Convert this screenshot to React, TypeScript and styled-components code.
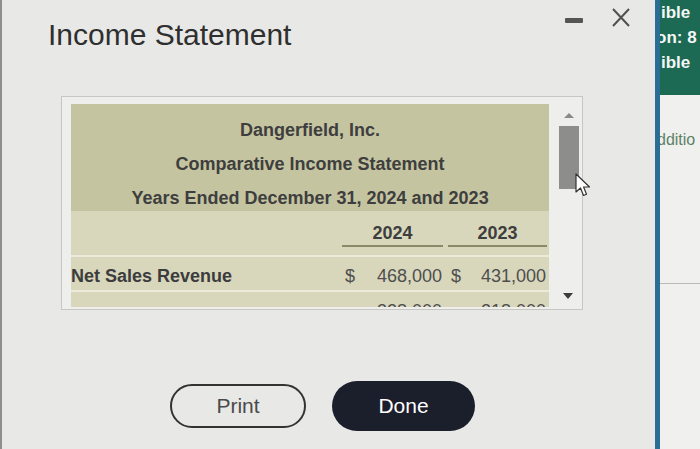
import React from "react";
import styled, { createGlobalStyle } from "styled-components";

const GlobalStyle = createGlobalStyle`
  html, body { margin: 0; padding: 0; }
  body {
    background: #e8e8e6;
    font-family: "Liberation Sans", Arial, sans-serif;
    overflow: hidden;
  }
`;

const Page = styled.div`
  display: flex;
  width: 700px;
  height: 449px;
  overflow: hidden;
  border-left: 2px solid #8e8e8c;
  box-sizing: border-box;
  background: #e8e8e6;
`;

const Main = styled.div`
  width: 653px;
  display: flex;
  flex-direction: column;
`;

const Header = styled.div`
  display: flex;
  align-items: flex-start;
  padding: 8px 25px 0 46px;
  height: 44px;
`;

const Title = styled.h1`
  margin: 10px 0 0 0;
  font-size: 30px;
  line-height: 34px;
  font-weight: 400;
  color: #2f2f2f;
`;

const Controls = styled.div`
  margin-left: auto;
  display: flex;
  align-items: flex-start;
  gap: 29px;
`;

const Minimize = styled.div`
  width: 18px;
  height: 5px;
  margin-top: 10px;
  background: #555;
  border-radius: 1px;
`;

const CloseIcon = () => (
  <svg width="18" height="19" viewBox="0 0 18 19">
    <path d="M1 1 L17 18 M17 1 L1 18" stroke="#505050" strokeWidth="2" fill="none" />
  </svg>
);

const Box = styled.div`
  position: relative;
  margin: 44px 0 0 59px;
  width: 522px;
  height: 214px;
  box-sizing: border-box;
  border: 1px solid #c6c6c3;
  background: #eeeeec;
  display: flex;
`;

const Sheet = styled.div`
  width: 479px;
  margin: 7px 0 2px 9px;
  overflow: hidden;
  color: #3e3e3e;
`;

const SheetHead = styled.div`
  background: #c5c4a1;
  height: 98px;
  padding-top: 9px;
  text-align: center;
  font-weight: 700;
  font-size: 18px;
  line-height: 34px;
`;

const Grid = styled.div<{ $top?: boolean }>`
  display: grid;
  grid-template-columns: 266px 101px 99px;
  column-gap: 5px;
  background: #d8d7bc;
  border-top: ${(p) => (p.$top ? "none" : "2px solid #ebeadb")};
`;

const YearsRow = styled(Grid)`
  height: 44px;
`;

const YearCell = styled.div`
  margin-top: 10px;
  height: 24px;
  line-height: 24px;
  text-align: center;
  font-weight: 700;
  font-size: 18px;
  border-bottom: 2px solid #8b8a68;
`;

const DataRow = styled(Grid)`
  padding-top: 5px;
  height: 28px;
  line-height: 28px;
  font-size: 18px;
`;

const Label = styled.div`
  font-weight: 700;
  color: #3c3c3c;
`;

const Amount = styled.div`
  display: flex;
  justify-content: space-between;
  padding: 0 1px 0 3px;
  color: #4e4e4e;
`;

const Scrollbar = styled.div`
  width: 33px;
  display: flex;
  flex-direction: column;
  align-items: center;
  padding: 16px 0 10px 0;
  box-sizing: border-box;
`;

const ArrowUp = styled.div`
  width: 0;
  height: 0;
  margin-left: 6px;
  border-left: 5px solid transparent;
  border-right: 5px solid transparent;
  border-bottom: 5px solid #8a8a8a;
`;

const ArrowDown = styled.div`
  width: 0;
  height: 0;
  margin-top: auto;
  margin-left: 4px;
  border-left: 5px solid transparent;
  border-right: 5px solid transparent;
  border-top: 6px solid #3c3c3c;
`;

const Thumb = styled.div`
  margin-top: 8px;
  margin-left: 7px;
  width: 20px;
  height: 63px;
  background: #8d8d8b;
`;

const Cursor = styled.svg`
  position: absolute;
  left: 513px;
  top: 76px;
`;

const Buttons = styled.div`
  display: flex;
  align-items: center;
  justify-content: center;
  gap: 26px;
  margin-top: 71px;
  padding-right: 12px;
`;

const PillButton = styled.button<{ $dark?: boolean }>`
  font-family: "Liberation Sans", Arial, sans-serif;
  font-size: 21px;
  box-sizing: border-box;
  width: ${(p) => (p.$dark ? "143px" : "136px")};
  height: ${(p) => (p.$dark ? "50px" : "44px")};
  border-radius: 25px;
  border: ${(p) => (p.$dark ? "none" : "2px solid #333")};
  background: ${(p) => (p.$dark ? "#1b1e2b" : "transparent")};
  color: ${(p) => (p.$dark ? "#ffffff" : "#4a4a4a")};
  padding: 0;
`;

const Side = styled.div`
  flex: 1;
  border-left: 5px solid #2b6e95;
  background: #f0f0ee;
  display: flex;
  flex-direction: column;
  overflow: hidden;
`;

const SideHead = styled.div`
  background: #1c6954;
  height: 95px;
  flex-shrink: 0;
  padding-left: 1px;
  color: #f4f7f5;
  font-weight: 700;
  font-size: 17px;
  line-height: 25px;
  white-space: nowrap;
`;

const SideLine = styled.div<{ $shift?: number }>`
  margin-left: ${(p) => p.$shift ?? 0}px;
`;

const SideText = styled.div`
  margin-top: 35px;
  margin-left: -3px;
  color: #5d8267;
  font-size: 16px;
  line-height: 20px;
  white-space: nowrap;
`;

const SideRule = styled.div`
  margin-top: 133px;
  border-top: 1px solid #b9b9b7;
`;

const rows = [
  { label: "Net Sales Revenue", a: "468,000", b: "431,000", dollar: true },
  { label: "", a: "328,000", b: "218,000", dollar: false },
];

export default function App() {
  return (
    <>
      <GlobalStyle />
      <Page>
        <Main>
          <Header>
            <Title>Income Statement</Title>
            <Controls>
              <Minimize />
              <CloseIcon />
            </Controls>
          </Header>
          <Box>
            <Sheet>
              <SheetHead>
                <div>Dangerfield, Inc.</div>
                <div>Comparative Income Statement</div>
                <div>Years Ended December 31, 2024 and 2023</div>
              </SheetHead>
              <YearsRow $top>
                <div />
                <YearCell>2024</YearCell>
                <YearCell>2023</YearCell>
              </YearsRow>
              {rows.map((r, i) => (
                <DataRow key={i}>
                  <Label>{r.label}</Label>
                  <Amount>
                    <span>{r.dollar ? "$" : ""}</span>
                    <span>{r.a}</span>
                  </Amount>
                  <Amount>
                    <span>{r.dollar ? "$" : ""}</span>
                    <span>{r.b}</span>
                  </Amount>
                </DataRow>
              ))}
            </Sheet>
            <Scrollbar>
              <ArrowUp />
              <Thumb />
              <ArrowDown />
            </Scrollbar>
            <Cursor width="17" height="25" viewBox="0 0 17 25">
              <path
                d="M1 1 L1 19 L5.5 15 L8.5 22.5 L11.5 21.2 L8.6 14 L14.5 14 Z"
                fill="#ffffff"
                stroke="#333"
                strokeWidth="1.2"
                strokeLinejoin="round"
              />
            </Cursor>
          </Box>
          <Buttons>
            <PillButton>Print</PillButton>
            <PillButton $dark>Done</PillButton>
          </Buttons>
        </Main>
        <Side>
          <SideHead>
            <SideLine>ible</SideLine>
            <SideLine $shift={-5}>on: 8</SideLine>
            <SideLine>ible</SideLine>
          </SideHead>
          <SideText>dditio</SideText>
          <SideRule />
        </Side>
      </Page>
    </>
  );
}
